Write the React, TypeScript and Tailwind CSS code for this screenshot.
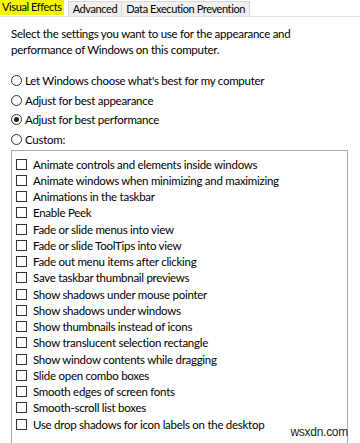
const items = [
  'Animate controls and elements inside windows',
  'Animate windows when minimizing and maximizing',
  'Animations in the taskbar',
  'Enable Peek',
  'Fade or slide menus into view',
  'Fade or slide ToolTips into view',
  'Fade out menu items after clicking',
  'Save taskbar thumbnail previews',
  'Show shadows under mouse pointer',
  'Show shadows under windows',
  'Show thumbnails instead of icons',
  'Show translucent selection rectangle',
  'Show window contents while dragging',
  'Slide open combo boxes',
  'Smooth edges of screen fonts',
  'Smooth-scroll list boxes',
  'Use drop shadows for icon labels on the desktop',
];

const radios = [
  { label: "Let Windows choose what's best for my computer", checked: false },
  { label: 'Adjust for best appearance', checked: false },
  { label: 'Adjust for best performance', checked: true },
  { label: 'Custom:', checked: false },
];

function Radio({ checked }: { checked: boolean }) {
  return (
    <span className="w-[11px] h-[11px] rounded-full border border-[#333] bg-white flex items-center justify-center shrink-0">
      {checked && <span className="w-[5px] h-[5px] rounded-full bg-[#222]" />}
    </span>
  );
}

export default function App() {
  return (
    <div
      className="relative w-[360px] h-[443px] overflow-hidden bg-white text-[11.5px] tracking-[-0.27px] text-black"
      style={{ fontFamily: 'Lato, "Noto Sans", sans-serif' }}
    >
      {/* Tab strip */}
      <div className="flex items-end h-[17px] border-b border-[#e3e3e3] text-[11px] tracking-[-0.4px]">
        <div className="h-[15px] self-start bg-[#f7f700] px-[2px] leading-[14px]">Visual Effects</div>
        <div className="ml-[4px] h-[15px] border border-b-0 border-[#d9d9d9] bg-[#f0f0f0] px-[4px] leading-[14px]">Advanced</div>
        <div className="h-[15px] border border-b-0 border-l-0 border-[#d9d9d9] bg-[#f0f0f0] px-[4px] leading-[14px]">Data Execution Prevention</div>
      </div>

      <div className="pl-[11px] pr-[12px]">
        <p className="mt-[9px] leading-[16px]">
          Select the settings you want to use for the appearance and
          <br />
          performance of Windows on this computer.
        </p>

        <div className="mt-[13px] flex flex-col">
          {radios.map((r) => (
            <div key={r.label} className="flex items-center gap-[3px] h-[19.5px]">
              <Radio checked={r.checked} />
              <span>{r.label}</span>
            </div>
          ))}
        </div>

        <div className="mt-[1px] h-[320px] border border-[#ababab] pt-[5px] pl-[4px]">
          {items.map((t) => (
            <div key={t} className="flex items-center gap-[6px] h-[16.25px]">
              <span className="w-[11px] h-[11px] border border-[#333] bg-white shrink-0" />
              <span>{t}</span>
            </div>
          ))}
        </div>
      </div>

      {/* watermark */}
      <div
        className="absolute right-[12px] bottom-[2px] text-[12px] text-[#222]"
        style={{ fontFamily: '"Liberation Sans", Arial, sans-serif' }}
      >
        wsxdn.com
      </div>
    </div>
  );
}
